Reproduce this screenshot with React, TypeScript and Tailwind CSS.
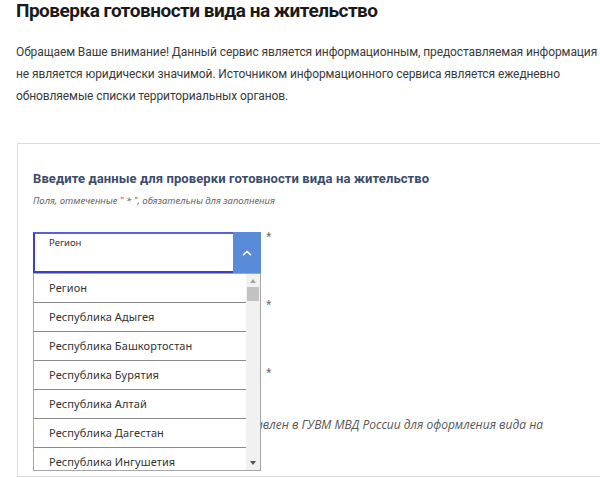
import { ChevronUp } from "lucide-react";

const regions = [
    "Регион",
    "Республика Адыгея",
    "Республика Башкортостан",
    "Республика Бурятия",
    "Республика Алтай",
    "Республика Дагестан",
    "Республика Ингушетия",
];

const Asterisk = () => <span className="ml-[5px] mt-[-1px] text-[10px] leading-none text-[#666]">*</span>;

const App = () => {
    return (
        <div className="min-h-[477px] overflow-hidden bg-white pl-4 font-['Open_Sans',sans-serif] text-[#333]">
            <h1 className="mt-[-3px] whitespace-nowrap font-['Roboto',sans-serif] text-[19px] font-bold leading-[28px] tracking-[-0.5px] text-[#1a1a1a]">
                Проверка готовности вида на жительство
            </h1>

            <p className="mt-[16px] whitespace-nowrap font-['Roboto',sans-serif] text-[12px] leading-[22px] tracking-[-0.1px] text-[#3a3a3a]">
                Обращаем Ваше внимание! Данный сервис является информационным, предоставляемая информация
                <br />
                не является юридически значимой. Источником информационного сервиса является ежедневно
                <br />
                обновляемые списки территориальных органов.
            </p>

            <div className="ml-px mt-[36px] h-[334px] w-[620px] border border-[#dcdcdc] pl-[15px] pt-[25px]">
                <h2 className="font-['Roboto',sans-serif] text-[13px] font-bold leading-[20px] tracking-[0.1px] text-[#3b4c6b]">
                    Введите данные для проверки готовности вида на жительство
                </h2>
                <p className="mt-[5px] font-['Noto_Sans',sans-serif] text-[9.5px] italic leading-[14px] text-[#666]">
                    Поля, отмеченные " * ", обязательны для заполнения
                </p>

                <div className="mt-[24px] flex flex-col gap-[27px] font-['Noto_Sans',sans-serif]">
                    {/* Region select, open */}
                    <div className="flex items-start">
                        <div className="relative flex h-[41px] w-[228px]">
                            <div className="flex-1 border-2 border-r-0 border-[#3b3fc9] border-t-[#5a5ed6] pl-[14px] pt-[2px] text-[9.5px] leading-[14px] text-[#333]">Регион</div>
                            <div className="flex w-[28px] items-center justify-center bg-[#5a8bd8]">
                                <ChevronUp className="h-[14px] w-[14px] text-white" strokeWidth={2.5} />
                            </div>

                            {/* Dropdown list */}
                            <div className="absolute left-0 top-[41px] z-10 flex h-[198px] w-[228px] border border-[#a5a5a5] bg-white">
                                <ul className="flex-1">
                                    {regions.map((r) => (
                                        <li key={r} className="flex h-[29px] items-center border-b border-[#8a8a8a] pl-[15px] text-[11px] tracking-[0.1px] text-[#333] last:border-b-0">
                                            {r}
                                        </li>
                                    ))}
                                </ul>
                                <div className="flex w-[14px] flex-col items-center bg-[#f1f1f1]">
                                    <span className="mt-[5px] h-0 w-0 border-x-[3.5px] border-b-[4px] border-x-transparent border-b-[#a3a3a3]" />
                                    <span className="mt-[4px] h-[14px] w-[12px] bg-[#c2c2c2]" />
                                    <span className="mt-auto mb-[5px] h-0 w-0 border-x-[3.5px] border-t-[4px] border-x-transparent border-t-[#555]" />
                                </div>
                            </div>
                        </div>
                        <Asterisk />
                    </div>

                    <div className="flex items-start">
                        <div className="h-[41px] w-[228px] border border-[#c8c8c8]" />
                        <Asterisk />
                    </div>

                    <div className="flex items-start">
                        <div className="h-[41px] w-[228px] border border-[#c8c8c8]" />
                        <Asterisk />
                    </div>
                </div>

                <p className="mt-[5px] whitespace-nowrap text-[12px] italic leading-[22px] text-[#555]">
                    Уточните орган, куда пакет был направлен в ГУВМ МВД России для оформления вида на
                    <br />
                    жительство
                </p>
            </div>
        </div>
    );
};

export default App;
